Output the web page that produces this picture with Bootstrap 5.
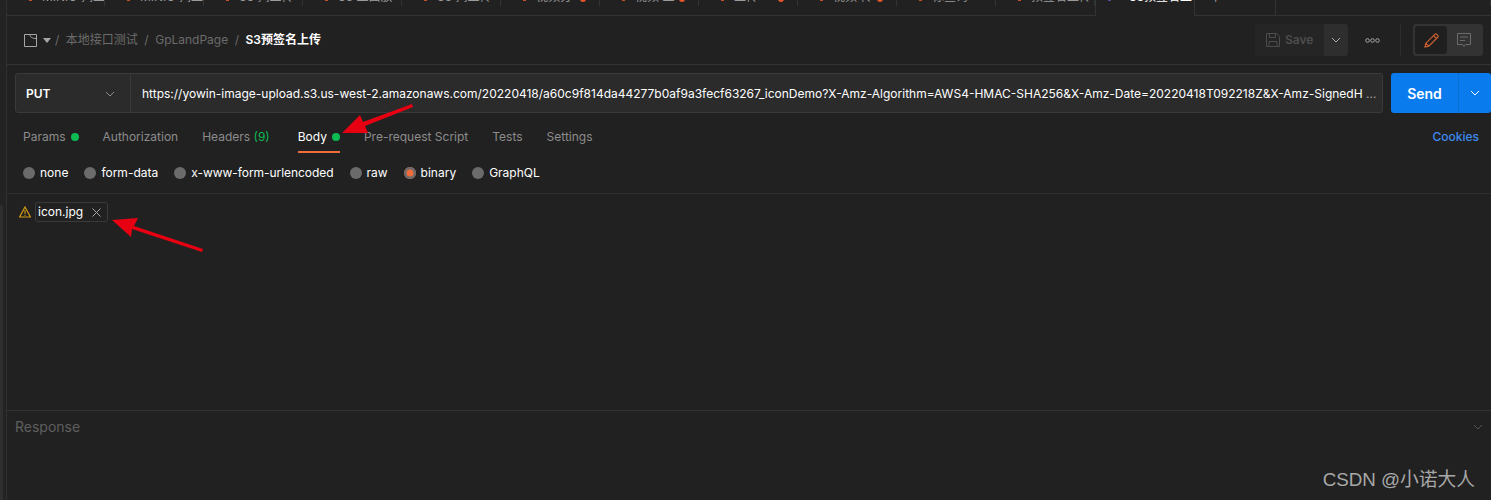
<!DOCTYPE html>
<html lang="en">
<head>
    <meta charset="UTF-8">
    <title>S3预签名上传</title>
    <link href="https://cdn.jsdelivr.net/npm/bootstrap@5.3.0/dist/css/bootstrap.min.css" rel="stylesheet">
    <style>
        html, body { height: 100%; overflow: hidden; }
        body {
            background: #212121;
            color: #fff;
            font-family: Inter, "Noto Sans CJK SC", sans-serif;
            font-size: 12px;
        }
        .pm-shell { height: 500px; position: relative; }
        .pm-rail { width: 7px; flex: none; background: #232323; border-right: 1px solid #303030; padding-top: 205px; }
        .pm-rail-thumb { width: 3px; height: 295px; background: #2f2f2f; border-top-right-radius: 2px; }
        .pm-main { min-width: 0; }

        /* top tabs, cut off by the screenshot */
        .pm-tabs { height: 16px; overflow: hidden; }
        .pm-tab { width: 99px; height: 16px; border-bottom: 1px solid #333; position: relative; flex: none; overflow: hidden; }
        .pm-tab::after { content: ""; position: absolute; right: 0; top: 0; width: 1px; height: 6px; background: #333; }
        .pm-tab span { position: absolute; left: 35px; top: -12px; color: #9a9a9a; white-space: nowrap; }
        .pm-tab i { position: absolute; left: 22px; top: 0; width: 3px; height: 1px; background: #c2502a; }
        .pm-tab b { position: absolute; right: 14px; top: -4px; width: 6px; height: 6px; border-radius: 50%; background: #e8562a; }
        .pm-tab-first { width: 98px; }
        .pm-tab-active { width: 100px; border-bottom: 0; border-left: 1px solid #333; border-right: 1px solid #333; }
        .pm-tab-active::after { display: none; }
        .pm-tab-active span { color: #fff; left: 33px; }
        .pm-tab-active i { background: #5a4a9a; left: 12px; }
        .pm-tab-plus { width: 81px; }
        .pm-tab-plus::after { height: 16px; }
        .pm-tab-plus span { left: 16px; top: -14px; font-size: 14px; }
        .pm-tab-rest { flex-grow: 1; border-bottom: 1px solid #333; }

        /* breadcrumb row */
        .pm-head { height: 49px; border-bottom: 1px solid #333; padding: 0 8px 0 17px; }
        .pm-crumb { color: #6b6b6b; font-size: 12px; gap: 6.5px; }
        .pm-crumb-cur { color: #fff; font-weight: 600; }
        .pm-caret { width: 0; height: 0; border: 4px solid transparent; border-top: 5px solid #a6a6a6; border-bottom: 0; margin: 0 4px 0 6px; }
        .pm-save { height: 32px; width: 93px; border-radius: 3px; background: #252525; overflow: hidden; flex: none; }
        .pm-save-main { width: 69px; color: #4d4d4d; font-weight: 600; padding-left: 11px; gap: 5px; }
        .pm-save-drop { width: 24px; background: #2e2e2e; }
        .pm-more { width: 48px; margin-right: 4px; }
        .pm-sep { width: 1px; height: 32px; background: #2e2e2e; margin-right: 12px; }
        .pm-toggle { width: 70px; height: 32px; background: #333; border-radius: 3px; padding: 2px; }
        .pm-toggle-on { width: 32px; height: 28px; background: #1f1f1f; border-radius: 3px; }
        .pm-toggle-off { width: 34px; }

        /* url row */
        .pm-url-row { padding: 8px 0 0 8px; height: 48px; }
        .pm-url { height: 40px; width: 1368px; flex: none; background: #2b2b2b; border: 1px solid #3a3a3a; border-radius: 3px; }
        .pm-method { width: 115px; flex: none; border-right: 1px solid #3a3a3a; padding: 1px 15px 0 10px; font-weight: 600; }
        .pm-url-text { padding: 1px 11px 0; font-size: 12px; color: #fff; white-space: nowrap; overflow: hidden; min-width: 0; }
        .pm-url-text span { color: #a6a6a6; }
        .pm-send { width: 100px; height: 40px; flex: none; background: #097bed; border-radius: 3px; margin-left: 8px; overflow: hidden; }
        .pm-send-main { width: 67px; font-size: 14px; font-weight: 600; }
        .pm-send-drop { width: 33px; border-left: 1px solid #0a6fd4; }

        /* request tabs */
        .pm-req { height: 40px; padding: 0 12px 0 16px; }
        .pm-req-item { color: #8c8c8c; height: 40px; padding-top: 8px; position: relative; margin-right: 24px; }
        .pm-req-wide { margin-right: 28px; }
        .pm-req-on { color: #fff; }
        .pm-req-on::after { content: ""; position: absolute; left: 0; right: 0; bottom: 0; height: 2px; background: #f26b3a; }
        .pm-green { color: #0cbb52; }
        .pm-dot { width: 8px; height: 8px; border-radius: 50%; background: #0cbb52; margin-left: 5px; }
        .pm-cookies { color: #3d8bf0; font-weight: 500; padding-top: 8px; }

        /* body type radios */
        .pm-types { height: 41px; padding: 0 16px; border-bottom: 1px solid #2e2e2e; gap: 16px; }
        .pm-radio { width: 12px; height: 12px; border-radius: 50%; background: #6b6b6b; margin-right: 5px; flex: none; }
        .pm-radio-on { background: #f26b3a; box-shadow: inset 0 0 0 2.5px #6b6b6b; }
        .pm-tight { letter-spacing: -0.05px; }

        /* body */
        .pm-body { height: 216px; padding: 8px 0 0 12px; }
        .pm-file { height: 20px; border: 1px solid #3a3a3a; border-radius: 3px; padding: 0 6px 0 2px; margin-left: 4px; width: 73px; }
        .pm-resp { border-top: 1px solid #333; padding: 5px 8px 0 8px; color: #5f5f5f; font-size: 14px; height: 90px; }

        /* overlay marks */
        .pm-arrows { position: absolute; left: 0; top: 0; pointer-events: none; }
        .pm-mark { position: absolute; right: 16px; bottom: 9px; color: #a8a8a8; font: 18.75px "Liberation Sans", "Noto Sans CJK SC", sans-serif; }
    </style>
</head>
<body>
<div class="pm-shell d-flex">
    <div class="pm-rail"><div class="pm-rail-thumb"></div></div>
    <div class="pm-main flex-grow-1">
        <div class="pm-tabs d-flex">
            <div class="pm-tab pm-tab-first"><i></i><span>MINIO 揭上</span></div>
            <div class="pm-tab"><i></i><span>MINIO 揭上</span></div>
            <div class="pm-tab"><i></i><span>S3 揭上传</span></div>
            <div class="pm-tab"><i></i><span>S3 上面放</span></div>
            <div class="pm-tab"><i></i><span>S3 揭上传</span></div>
            <div class="pm-tab"><i></i><span>视频分</span><b></b></div>
            <div class="pm-tab"><i></i><span>视频 上</span><b></b></div>
            <div class="pm-tab"><i></i><span>上传</span><b></b></div>
            <div class="pm-tab"><i></i><span>视频 传</span><b></b></div>
            <div class="pm-tab"><i></i><span>标查询</span></div>
            <div class="pm-tab"><i></i><span>预签名上传</span></div>
            <div class="pm-tab pm-tab-active"><i></i><span>S3预签名上</span></div>
            <div class="pm-tab pm-tab-plus"><span>+</span></div>
            <div class="pm-tab pm-tab-rest"></div>
        </div>

        <div class="pm-head d-flex align-items-center">
            <svg width="13" height="13" viewBox="0 0 13 13" fill="none" stroke="#a6a6a6">
                <path d="M.5.5h12v12H.5zM6 .5c0 2.500 2 4 6.500 4"/>
            </svg>
            <span class="pm-caret"></span>
            <div class="pm-crumb d-flex">
                <span>/</span><span>本地接口测试</span><span>/</span><span>GpLandPage</span><span>/</span><span class="pm-crumb-cur">S3预签名上传</span>
            </div>
            <div class="ms-auto d-flex align-items-center">
                <div class="pm-save d-flex">
                    <div class="pm-save-main d-flex align-items-center">
                        <svg width="14" height="14" viewBox="0 0 14 14" fill="none" stroke="#4d4d4d"><path d="M.5.5h10l3 3v10H.5zM3.500.5v4h6v-4M3 13.500v-5h8v5"/></svg>
                        Save
                    </div>
                    <div class="pm-save-drop d-flex align-items-center justify-content-center">
                        <svg width="10" height="6" viewBox="0 0 10 6" fill="none" stroke="#a6a6a6"><path d="M1 1l4 4 4-4"/></svg>
                    </div>
                </div>
                <div class="pm-more d-flex justify-content-center">
                    <svg width="15" height="5" viewBox="0 0 15 5" fill="none" stroke="#a6a6a6"><circle cx="2.500" cy="2.500" r="1.800"/><circle cx="7.500" cy="2.500" r="1.800"/><circle cx="12.500" cy="2.500" r="1.800"/></svg>
                </div>
                <div class="pm-sep"></div>
                <div class="pm-toggle d-flex">
                    <div class="pm-toggle-on d-flex align-items-center justify-content-center">
                        <svg width="15" height="15" viewBox="0 0 15 15" fill="none" stroke="#d0602e" stroke-width="1.200"><path d="M1 14l.9-3.800L10.800 1.300a1.400 1.400 0 0 1 2 0l.9.9a1.400 1.400 0 0 1 0 2L4.800 13.100zM9.500 2.600l2.900 2.900M1.900 10.200l2.900 2.900"/></svg>
                    </div>
                    <div class="pm-toggle-off d-flex align-items-center justify-content-center">
                        <svg width="14" height="15" viewBox="0 0 14 15" fill="none" stroke="#6b6b6b"><path d="M.5.5h13v11H8.500L7 13.500 5.500 11.500H.5zM3 4h8M3 7.500h5"/></svg>
                    </div>
                </div>
            </div>
        </div>

        <div class="pm-url-row d-flex">
            <div class="pm-url d-flex">
                <div class="pm-method d-flex align-items-center justify-content-between">
                    PUT
                    <svg width="10" height="6" viewBox="0 0 10 6" fill="none" stroke="#8c8c8c"><path d="M1 1l4 4 4-4"/></svg>
                </div>
                <div class="pm-url-text align-self-center flex-grow-1">https://yowin-image-upload.s3.us-west-2.amazonaws.com/20220418/a60c9f814da44277b0af9a3fecf63267_iconDemo?X-Amz-Algorithm=AWS4-HMAC-SHA256&amp;X-Amz-Date=20220418T092218Z&amp;X-Amz-SignedH <span>...</span></div>
            </div>
            <div class="pm-send d-flex">
                <div class="pm-send-main d-flex align-items-center justify-content-center">Send</div>
                <div class="pm-send-drop d-flex align-items-center justify-content-center">
                    <svg width="10" height="6" viewBox="0 0 10 6" fill="none" stroke="#fff"><path d="M1 1l4 4 4-4"/></svg>
                </div>
            </div>
        </div>

        <div class="pm-req d-flex">
            <div class="pm-req-item d-flex align-items-center">Params<span class="pm-dot"></span></div>
            <div class="pm-req-item d-flex align-items-center">Authorization</div>
            <div class="pm-req-item pm-req-wide d-flex align-items-center">Headers&nbsp;<span class="pm-green">(9)</span></div>
            <div class="pm-req-item pm-req-on d-flex align-items-center">Body<span class="pm-dot"></span></div>
            <div class="pm-req-item d-flex align-items-center">Pre-request Script</div>
            <div class="pm-req-item d-flex align-items-center">Tests</div>
            <div class="pm-req-item d-flex align-items-center">Settings</div>
            <div class="pm-cookies ms-auto d-flex align-items-center">Cookies</div>
        </div>

        <div class="pm-types d-flex align-items-center">
            <div class="d-flex align-items-center"><span class="pm-radio"></span>none</div>
            <div class="d-flex align-items-center"><span class="pm-radio"></span>form-data</div>
            <div class="d-flex align-items-center pm-tight"><span class="pm-radio"></span>x-www-form-urlencoded</div>
            <div class="d-flex align-items-center"><span class="pm-radio"></span>raw</div>
            <div class="d-flex align-items-center"><span class="pm-radio pm-radio-on"></span>binary</div>
            <div class="d-flex align-items-center"><span class="pm-radio"></span>GraphQL</div>
        </div>

        <div class="pm-body d-flex align-items-start">
            <svg width="12" height="12" viewBox="0 0 12 12" fill="none" stroke="#d39a12" stroke-width="1.200" class="mt-1"><path d="M6 1L11.400 11H.6zM6 4.300v3.500M6 8.800v1"/></svg>
            <div class="pm-file d-flex align-items-center justify-content-between">
                icon.jpg
                <svg width="9" height="9" viewBox="0 0 9 9" fill="none" stroke="#a6a6a6"><path d="M.5.5l8 8M8.500.5l-8 8"/></svg>
            </div>
        </div>

        <div class="pm-resp d-flex justify-content-between">
            Response
            <svg width="10" height="6" viewBox="0 0 10 6" fill="none" stroke="#555" class="mt-2"><path d="M1 1l4 4 4-4"/></svg>
        </div>
    </div>

    <!-- red arrows drawn on the screenshot -->
    <svg class="pm-arrows" width="1491" height="500" viewBox="0 0 1491 500" fill="#e60012" stroke="none">
        <path d="M342 133L360 115L363 122L412 104L413 107L365 126L368 133z"/>
        <path d="M112 220L138 218L134 226L203 249L202 252L132 229L131 237z"/>
    </svg>
    <div class="pm-mark">CSDN @小诺大人</div>
</div>
<script src="https://cdn.jsdelivr.net/npm/bootstrap@5.3.0/dist/js/bootstrap.bundle.min.js"></script>
</body>
</html>
